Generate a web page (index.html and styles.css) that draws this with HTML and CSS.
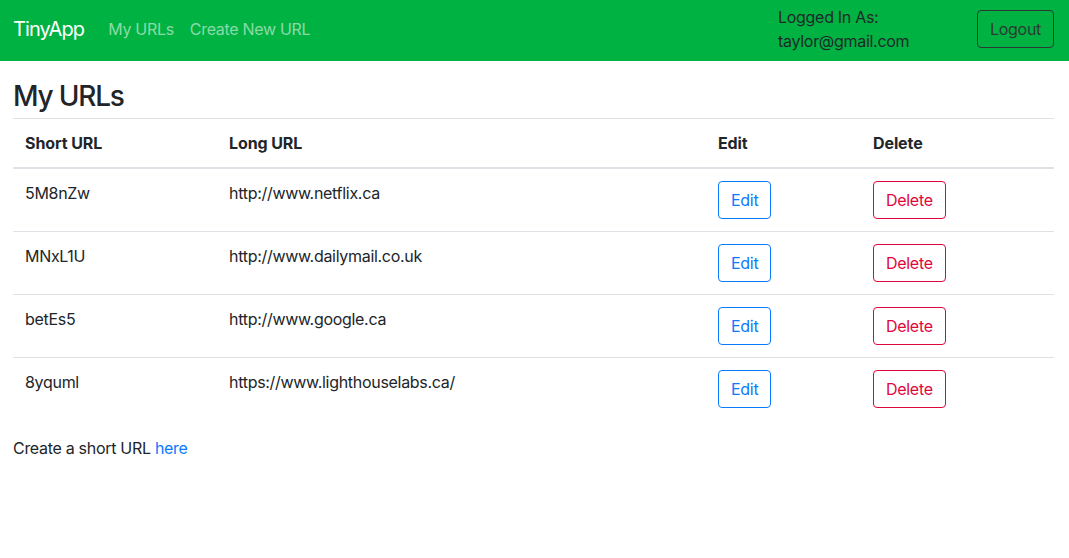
FILE: index.html
```html
<!DOCTYPE html>
<html lang="en">
<head>
<meta charset="utf-8">
<title>TinyApp</title>
<link rel="stylesheet" href="styles.css">
</head>
<body>
<nav class="navbar">
  <a class="brand" href="#">TinyApp</a>
  <div class="nav-links">
    <a class="nav-link" href="#">My URLs</a>
    <a class="nav-link" href="#">Create New URL</a>
  </div>
  <div class="user">
    <div class="user-text">Logged In As:<br>taylor@gmail.com</div>
    <button class="btn btn-dark">Logout</button>
  </div>
</nav>
<main class="container">
  <h3 class="title">My URLs</h3>
  <table class="table">
    <thead>
      <tr>
        <th class="c1">Short URL</th>
        <th class="c2">Long URL</th>
        <th class="c3">Edit</th>
        <th class="c4">Delete</th>
      </tr>
    </thead>
    <tbody>
      <tr>
        <td>5M8nZw</td>
        <td>http://www.netflix.ca</td>
        <td><button class="btn btn-primary">Edit</button></td>
        <td><button class="btn btn-danger">Delete</button></td>
      </tr>
      <tr>
        <td>MNxL1U</td>
        <td>http://www.dailymail.co.uk</td>
        <td><button class="btn btn-primary">Edit</button></td>
        <td><button class="btn btn-danger">Delete</button></td>
      </tr>
      <tr>
        <td>betEs5</td>
        <td>http://www.google.ca</td>
        <td><button class="btn btn-primary">Edit</button></td>
        <td><button class="btn btn-danger">Delete</button></td>
      </tr>
      <tr>
        <td>8yquml</td>
        <td>https://www.lighthouselabs.ca/</td>
        <td><button class="btn btn-primary">Edit</button></td>
        <td><button class="btn btn-danger">Delete</button></td>
      </tr>
    </tbody>
  </table>
  <p class="create">Create a short URL <a href="#">here</a></p>
</main>
</body>
</html>
```
FILE: styles.css
```css
* { box-sizing: border-box; }
body {
  margin: 0;
  font-family: "Inter", "Helvetica Neue", Arial, sans-serif;
  font-size: 16px;
  line-height: 24px;
  letter-spacing: -0.3px;
  color: #212529;
  background: #fff;
}
a { text-decoration: none; }
.navbar {
  display: flex;
  align-items: center;
  height: 61px;
  padding: 0 15px 4px 13px;
  background: #00b242;
}
.brand {
  color: #fff;
  font-size: 20px;
  line-height: 30px;
  letter-spacing: -0.9px;
  margin-right: 16px;
}
.nav-links { display: flex; }
.nav-link {
  color: rgba(255, 255, 255, 0.55);
  padding: 0 8px;
}
.user {
  margin-left: auto;
  display: flex;
  align-items: center;
}
.user-text {
  color: #1e2a2a;
  width: 199px;
}
.btn {
  font-family: inherit;
  font-size: 16px;
  line-height: 24px;
  letter-spacing: -0.3px;
  padding: 6px 12px;
  background: transparent;
  border: 1px solid;
  border-radius: 4px;
  cursor: pointer;
}
.btn-dark { color: #2b3a35; border-color: #2b3a35; }
.btn-primary { color: #0a7aff; border-color: #0a7aff; }
.btn-danger { color: #e0063c; border-color: #e0063c; }
.container { padding: 18px 15px 0 13px; }
.title {
  margin: 0 0 5px;
  font-size: 28px;
  font-weight: 500;
  line-height: 34px;
  letter-spacing: -1.2px;
}
.table {
  width: 100%;
  border-collapse: collapse;
}
.table th, .table td {
  padding: 12px;
  text-align: left;
  vertical-align: top;
  border-top: 1px solid #dee2e6;
}
.table th {
  font-weight: 700;
  letter-spacing: -0.1px;
  border-bottom: 2px solid #dee2e6;
}
.c1 { width: 204px; }
.c2 { width: 489px; }
.c3 { width: 155px; }
.table tbody tr:last-child td { border-bottom: 0; }
.create { margin: 16px 0; }
.create a { color: #0a7aff; }
```
